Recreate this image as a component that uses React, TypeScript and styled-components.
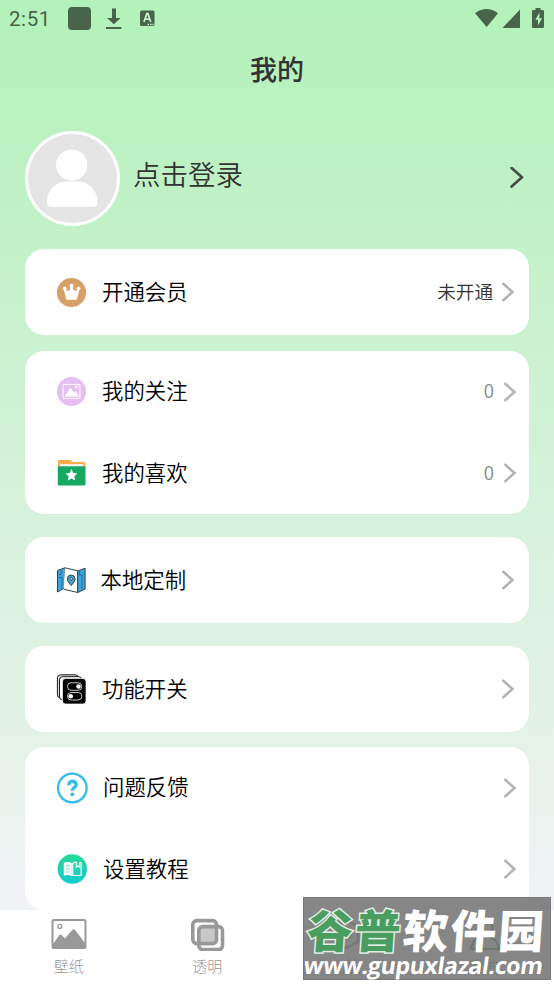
import React from "react";
import styled, { createGlobalStyle } from "styled-components";

const GlobalStyle = createGlobalStyle`
  *, *::before, *::after { box-sizing: border-box; }
  html, body { margin: 0; padding: 0; }
  body { font-family: "Noto Sans CJK SC", sans-serif; font-weight: 350; color: #000; }
  svg { display: block; flex: none; }
`;

const Screen = styled.div`
  position: relative;
  width: 554px;
  height: 984px;
  display: flex;
  flex-direction: column;
  overflow: hidden;
  background: #fff;
`;

const Content = styled.main`
  height: 910px;
  flex: none;
  background: linear-gradient(180deg, #b3f1ba 0%, #c4f1ca 28%, #d7f2dc 57%, #e4f2e7 81%, #f1f2f6 98%);
`;

const StatusBar = styled.header`
  height: 38px;
  display: flex;
  align-items: center;
  justify-content: space-between;
  padding: 0 9px;
  color: #48644b;
`;

const StatusGroup = styled.div`
  display: flex;
  align-items: center;
`;

const Clock = styled.span`
  width: 59px;
  font: 400 20.5px/38px Roboto, sans-serif;
  letter-spacing: 0.6px;
`;

const Title = styled.h1`
  margin: 0;
  height: 62px;
  text-align: center;
  font-size: 27px;
  font-weight: 500;
  -webkit-text-stroke: 0.1px #333;
  line-height: 62px;
  color: #333;
`;

const Profile = styled.section`
  margin-top: 31px;
  height: 95px;
  padding: 0 30px 0 25px;
  display: flex;
  align-items: center;
`;

const LoginLabel = styled.span`
  flex: 1;
  margin-left: 13px;
  padding-bottom: 11px;
  font-size: 27.5px;
  line-height: 40px;
  color: #333;
`;

const CardStack = styled.div`
  padding: 23px 25px 0;
`;

const Card = styled.section<{ $height: number; $gap: number }>`
  height: ${(p) => p.$height}px;
  margin-bottom: ${(p) => p.$gap}px;
  display: flex;
  flex-direction: column;
  border-radius: 19px;
  background: #fff;
`;

const Row = styled.div<{ $end: number }>`
  flex: 1;
  display: flex;
  align-items: center;
  padding: 0 ${(p) => p.$end}px 0 31px;
`;

const RowLabel = styled.span<{ $left: number }>`
  flex: 1;
  margin-left: ${(p) => p.$left}px;
  padding-bottom: 3px;
  font-size: 21.4px;
  line-height: 32px;
`;

const RowValue = styled.span<{ $muted?: boolean }>`
  margin-right: ${(p) => (p.$muted ? 9 : 8)}px;
  padding-bottom: 3px;
  font-size: 18.6px;
  line-height: 28px;
  color: ${(p) => (p.$muted ? "#888" : "#333")};
`;

const TabBar = styled.nav`
  flex: 1;
  display: grid;
  grid-template-columns: repeat(4, 1fr);
  background: #fff;
`;

const Tab = styled.div<{ $active?: boolean }>`
  display: flex;
  flex-direction: column;
  align-items: center;
  padding-top: 7px;
  color: ${(p) => (p.$active ? "#42ae58" : "#999")};
`;

const TabLabel = styled.span`
  margin: 4px 1px 0 0;
  font-size: 15px;
  font-weight: 300;
  line-height: 22px;
`;

const Watermark = styled.aside`
  position: absolute;
  left: 303px;
  top: 897px;
  width: 248px;
  height: 83px;
  background: rgba(111, 111, 111, 0.84);
  border: 1px solid #777;
  color: #fff;
`;

const WatermarkName = styled.div`
  height: 52px;
  padding-left: 4px;
  font-size: 45.5px;
  font-weight: 900;
  letter-spacing: 2.2px;
  line-height: 60px;
  white-space: nowrap;
  transform: skewX(-4deg);
`;

const WatermarkAccent = styled.span`
  color: #4a9d60;
  -webkit-text-stroke: 3px #e2eee4;
  paint-order: stroke fill;
`;

const WatermarkUrl = styled.div`
  font: 700 23.2px/30px "Open Sans", sans-serif;
  letter-spacing: -0.45px;
  white-space: nowrap;
  transform: skewX(-8deg);
`;

const ChevronIcon = ({ color = "#b4b4b4" }: { color?: string }) => (
  <svg width="14" height="22" viewBox="0 0 14 22" fill="none" stroke={color} strokeWidth="2.6">
    <path d="M1.5 2 11.5 11 1.5 20" />
  </svg>
);

const LoginChevron = () => (
  <svg width="14" height="24" viewBox="0 0 14 24" fill="none" stroke="#444c47" strokeWidth="2.7" strokeLinecap="round" strokeLinejoin="round">
    <path d="M1.6 1 12 10.200 1.600 19.500" />
  </svg>
);

const NotificationIcons = () => (
  <svg width="90" height="26" viewBox="68 6 90 26" fill="currentColor">
    <rect x="68" y="7" width="23" height="23" rx="4" />
    <path d="M112 8.500h4v9.500h4.600l-6.800 6.200L107 18h5zM106 27h15.400v2H106z" />
    <rect x="140" y="10.500" width="14.500" height="15.500" rx="1.500" />
    <path d="m144 22 2.800-8.300h1.100l2.800 8.300m-5.800-2.800h4.900" fill="none" stroke="#c8f3ce" strokeWidth="1.700" />
    <path d="M147.500 23.800h1.500v1.400h-1.500zM150 23.800h1.500v1.400H150zM152.400 23.800h1.200v1.400h-1.200z" fill="#c8f3ce" />
  </svg>
);

const SystemIcons = () => (
  <svg width="70" height="22" viewBox="475 8 70 22" fill="currentColor">
    <path d="M475 13.200Q486.500 4.800 498 13.200L486.700 27zM520 9.600V28h-17.500z" />
    <path d="M535.500 8h5v2h2.200q1.300 0 1.300 1.300v15.200q0 1.500-1.300 1.500h-9.400q-1.300 0-1.300-1.500V11.300q0-1.300 1.300-1.300h2.200z" />
    <path d="m539.500 12.500-4.200 7.300h2.700v5.700l4-7.200h-2.700z" fill="#b4f1bc" />
  </svg>
);

const Avatar = () => (
  <svg width="95" height="95" viewBox="0 0 95 95">
    <circle cx="47.500" cy="47.500" r="46" fill="#e4e4e4" stroke="#fff" strokeWidth="3" />
    <circle cx="46.700" cy="34" r="15.600" fill="#fff" />
    <path d="M22 71c0-13 10-20.600 19-20.600h12.500C64 50.400 72.500 60 72.500 71c0 4-2 5-5 5h-40c-4 0-5.500-1.300-5.500-5z" fill="#fff" />
  </svg>
);

const CrownIcon = () => (
  <svg width="31" height="31" viewBox="0 0 31 31">
    <circle cx="15.500" cy="15.500" r="14.600" fill="#d6a066" />
    <g fill="#fff">
      <path d="M7.600 12q3.700 3 6.200.7l.8-3.700h2l.8 3.700q2.500 2.300 6.200-.7l-2.500 9.500q-.3 1.200-1.300 1.200h-8.400q-1 0-1.300-1.200z" />
      <circle cx="8.700" cy="11.300" r="1.900" /><circle cx="15.600" cy="8.900" r="2.100" /><circle cx="22.500" cy="11.300" r="1.900" />
    </g>
  </svg>
);

const FollowIcon = () => (
  <svg width="31" height="31" viewBox="0 0 31 31">
    <circle cx="15.500" cy="15.500" r="14.600" fill="#e4bff0" />
    <rect x="7.100" y="8.400" width="16.800" height="14" fill="none" stroke="#fff" strokeWidth="1" />
    <path d="m8.500 20.500 6-8.700 3.500 5 1.600-2 3.400 5.700z" fill="#fff" />
    <circle cx="20.300" cy="11.200" r="1.400" fill="#fff" />
  </svg>
);

const FolderIcon = () => (
  <svg width="31" height="31" viewBox="0 0 31 31">
    <path d="M2 3q0-1 1-1h12l1 1.900h12.300q1 0 1 1v3.800H2z" fill="#ffaa48" />
    <path d="M4 6.200h23.300v3H4z" fill="#fff" />
    <path d="M1.800 8.200h27.700v18q0 1.200-1.200 1.200H3q-1.200 0-1.200-1.200z" fill="#16a863" />
    <path d="m15.500 11 1.800 4 4.300.4-3.300 2.900 1 4.300-3.800-2.200-3.800 2.200 1-4.300-3.300-2.900 4.300-.4z" fill="#fff" />
  </svg>
);

const MapIcon = () => (
  <svg width="31" height="31" viewBox="0 0 31 31" stroke="#30434c" strokeWidth="1" strokeLinejoin="round">
    <path d="m1.500 5.500 7.400-2.700v20L1.500 27z" fill="#3da5dc" />
    <path d="m8.900 2.800 12.800 3v21.700l-14-3.300" fill="#fff" />
    <path d="m21.700 6 7.400-2.700V24l-7.400 3.500z" fill="#3da5dc" />
    <path d="M5 5.500v4H3m0 3h3v11m17.300-17v3.300H26v14" fill="none" stroke="#236c93" />
    <path d="M15.200 20.500s-3.900-4.200-3.900-6.600a3.900 3.900 0 0 1 7.800 0c0 2.400-3.900 6.600-3.900 6.600z" fill="#3da5dc" />
    <circle cx="15.200" cy="13.800" r="1.300" fill="#fff" />
  </svg>
);

const SwitchIcon = () => (
  <svg width="31" height="31" viewBox="0 0 31 31">
    <g fill="#ddd" stroke="#000" strokeWidth=".9">
      <rect x="1.400" y=".8" width="21" height="23" rx="3" />
      <rect x="3.500" y="2.700" width="22" height="23" rx="3" fill="#fff" />
    </g>
    <rect x="6.500" y="4.500" width="23.500" height="25.500" rx="3.200" fill="#000" stroke="#fff" strokeWidth=".7" />
    <g fill="none" stroke="#ddd" strokeWidth=".9">
      <rect x="11.400" y="8.800" width="14.400" height="7.500" rx="3.700" />
      <rect x="11.400" y="18.500" width="14.400" height="7.500" rx="3.700" />
    </g>
    <circle cx="22.500" cy="12.500" r="2.300" fill="#fff" />
    <circle cx="14.700" cy="22.200" r="2.300" fill="#fff" />
  </svg>
);

const HelpIcon = () => (
  <svg width="32" height="32" viewBox="0 0 32 32" fill="none" stroke="#33bde8">
    <circle cx="16.300" cy="16" r="14.300" strokeWidth="2.300" />
    <path d="M12.800 13.200c0-5.500 7.400-4.900 7.400-.7 0 3-3.900 2.600-3.900 6.200" strokeWidth="3.400" />
    <circle cx="16.300" cy="22.300" r="1.900" fill="#33bde8" stroke="none" />
  </svg>
);

const TutorialIcon = () => (
  <svg width="32" height="32" viewBox="0 0 32 32">
    <defs>
      <linearGradient id="tutorial" x2="0" y2="1"><stop stopColor="#29d994" /><stop offset="1" stopColor="#13cbd4" /></linearGradient>
    </defs>
    <circle cx="16.300" cy="16" r="14.700" fill="url(#tutorial)" />
    <path d="M7.800 9.700q5-1.800 8 .5v13q-3.500-2-8-.5z" fill="#fff" />
    <path d="M16.800 10.200q2-1 3.500-1v5l1.600-1.100 1.600 1.100V9.500h1.600v13h-8.300z" fill="none" stroke="#fff" strokeWidth="1.200" />
    <path d="M9.300 13h4.800m-4.800 3h4.800m-4.800 3h4.800" stroke="#25d4ae" strokeWidth=".7" />
  </svg>
);

const WallpaperIcon = () => (
  <svg width="36" height="34" viewBox="0 0 36 34">
    <rect x="1.500" y="3" width="33" height="28" rx="1.500" fill="none" stroke="currentColor" strokeWidth="2" />
    <circle cx="8.800" cy="9.400" r="2" fill="none" stroke="currentColor" strokeWidth="1.300" />
    <path d="M2 27 8.400 18.200q1.300-1.300 2.500 0l3 3.400 7.400-8.700q1.500-1.500 2.800 0L34 26v5H2z" fill="currentColor" />
  </svg>
);

const TransparentIcon = () => (
  <svg width="36" height="34" viewBox="0 0 36 34" fill="none" stroke="currentColor" strokeWidth="3.600">
    <rect x="10" y="9" width="17" height="17" fill="#c8c8c8" stroke="none" />
    <rect x="2.800" y="3.600" width="23.700" height="23" rx="4" />
    <rect x="8.800" y="9.600" width="23.700" height="23" rx="4" />
  </svg>
);

const FeatureIcon = () => (
  <svg width="34" height="34" viewBox="0 0 34 34" fill="none" stroke="currentColor" strokeWidth="2.500">
    <path d="m17 3 12 6.500v15L17 31 5 24.500v-15z" /><circle cx="17" cy="17" r="5" />
  </svg>
);

const MineIcon = () => (
  <svg width="34" height="34" viewBox="0 0 34 34" fill="none" stroke="currentColor" strokeWidth="2">
    <circle cx="17" cy="11" r="7.500" /><path d="M3 32q2-12 14-13 12 1 14 13z" />
  </svg>
);

interface Entry {
  label: string;
  icon: React.ReactNode;
  value?: string;
  muted?: boolean;
  labelGap?: number;
}

interface EntryGroup {
  height: number;
  gap: number;
  end: number;
  entries: Entry[];
}

const groups: EntryGroup[] = [
  { height: 86, gap: 16, end: 14, entries: [{ label: "开通会员", icon: <CrownIcon />, value: "未开通" }] },
  {
    height: 163, gap: 23, end: 12,
    entries: [
      { label: "我的关注", icon: <FollowIcon />, value: "0", muted: true },
      { label: "我的喜欢", icon: <FolderIcon />, value: "0", muted: true },
    ],
  },
  { height: 86, gap: 23, end: 14, entries: [{ label: "本地定制", icon: <MapIcon />, labelGap: 13.5 }] },
  { height: 86, gap: 15, end: 14, entries: [{ label: "功能开关", icon: <SwitchIcon /> }] },
  {
    height: 163, gap: 0, end: 12,
    entries: [
      { label: "问题反馈", icon: <HelpIcon /> },
      { label: "设置教程", icon: <TutorialIcon /> },
    ],
  },
];

const tabs = [
  { label: "壁纸", icon: <WallpaperIcon /> },
  { label: "透明", icon: <TransparentIcon /> },
  { label: "功能", icon: <FeatureIcon /> },
  { label: "我的", icon: <MineIcon />, active: true },
];

export default function App() {
  return (
    <>
      <GlobalStyle />
      <Screen>
        <Content>
          <StatusBar>
            <StatusGroup><Clock>2:51</Clock><NotificationIcons /></StatusGroup>
            <SystemIcons />
          </StatusBar>
          <Title>我的</Title>
          <Profile>
            <Avatar />
            <LoginLabel>点击登录</LoginLabel>
            <LoginChevron />
          </Profile>
          <CardStack>
            {groups.map((group) => (
              <Card key={group.entries[0].label} $height={group.height} $gap={group.gap}>
                {group.entries.map((entry) => (
                  <Row key={entry.label} $end={group.end}>
                    {entry.icon}
                    <RowLabel $left={entry.labelGap ?? 15}>{entry.label}</RowLabel>
                    {entry.value && <RowValue $muted={entry.muted}>{entry.value}</RowValue>}
                    <ChevronIcon />
                  </Row>
                ))}
              </Card>
            ))}
          </CardStack>
        </Content>
        <TabBar>
          {tabs.map((tab) => (
            <Tab key={tab.label} $active={tab.active}>
              {tab.icon}
              <TabLabel>{tab.label}</TabLabel>
            </Tab>
          ))}
        </TabBar>
        <Watermark>
          <WatermarkName><WatermarkAccent>谷普</WatermarkAccent>软件园</WatermarkName>
          <WatermarkUrl>www.gupuxlazal.com</WatermarkUrl>
        </Watermark>
      </Screen>
    </>
  );
}
